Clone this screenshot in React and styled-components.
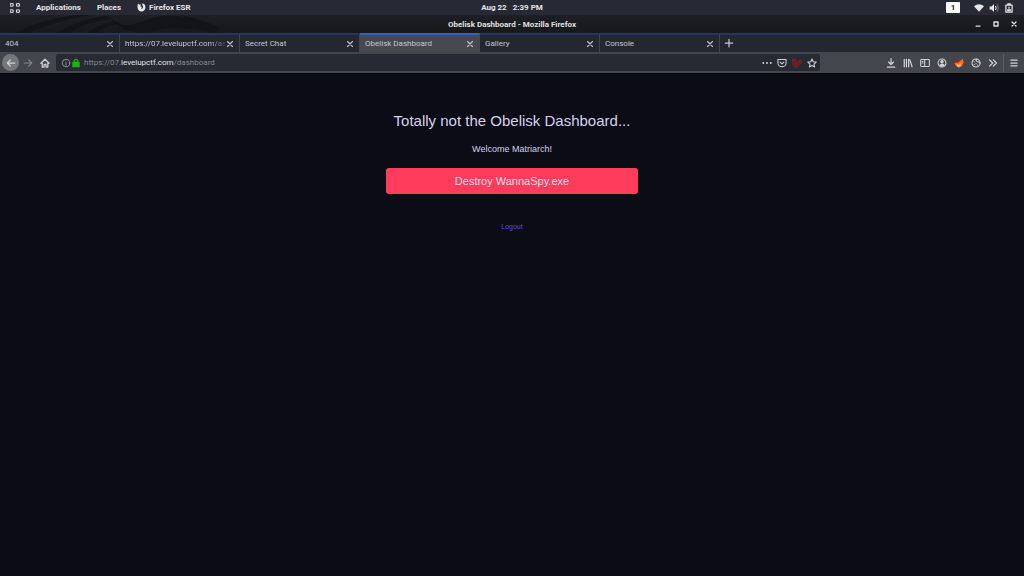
import React from 'react';
import styled, { createGlobalStyle, css } from 'styled-components';

const GlobalStyle = createGlobalStyle`
  * {
    box-sizing: border-box;
  }
  body {
    margin: 0;
    background: #0c0c16;
    font-family: Roboto, 'Noto Sans', sans-serif;
  }
  button {
    margin: 0;
    padding: 0;
    border: 0;
    background: none;
    color: inherit;
    font-family: inherit;
  }
`;

const Desktop = styled.div`
  display: flex;
  flex-direction: column;
  min-height: 100vh;
`;

/* ---- system panel ---- */

const Panel = styled.header`
  display: grid;
  grid-template-columns: 1fr auto 1fr;
  align-items: center;
  height: 15px;
  padding: 0 10px;
  background: #272935;
  color: #e6e6ea;
  font-size: 8px;
  font-weight: 700;
  line-height: 15px;
`;

const PanelMenu = styled.nav`
  display: flex;
  align-items: center;
  gap: 16px;
`;

const PanelButton = styled.button`
  display: flex;
  align-items: center;
  gap: 3px;
  font-size: 8px;
  font-weight: 700;
  line-height: 15px;
`;

const Clock = styled.time`
  white-space: pre;
`;

const Tray = styled.div`
  display: flex;
  align-items: center;
  justify-content: flex-end;
  gap: 5px;
`;

const Workspace = styled.button`
  width: 14px;
  height: 11px;
  margin-right: 9px;
  border-radius: 1px;
  background: #fff;
  color: #222;
  font-size: 8px;
  font-weight: 700;
  line-height: 11px;
`;

/* ---- window ---- */

const TitleBar = styled.div`
  display: grid;
  grid-template-columns: 1fr auto 1fr;
  align-items: center;
  height: 18px;
  background: linear-gradient(#1d1f24, #17181b);
  color: #e0e0e2;
`;

const DragonArt = styled.svg`
  width: 230px;
  height: 18px;
`;

const WindowTitle = styled.h1`
  margin: 0;
  padding-top: 2px;
  font-size: 8px;
  font-weight: 700;
  line-height: 16px;
`;

const WindowControls = styled.div`
  display: flex;
  justify-content: flex-end;
  gap: 8px;
  padding-right: 5px;
`;

const TabStrip = styled.div`
  display: flex;
  height: 19px;
  border-top: 2px solid #21376c;
  background: #242630;
  color: #c6c7cb;
`;

const Tab = styled.div`
  display: flex;
  align-items: center;
  flex: 0 1 120px;
  min-width: 0;
  height: 17px;
  padding: 0 4px 0 5px;
  border-right: 1px solid #43454e;
  ${({ $active }) => $active && css`
    height: 19px;
    margin-top: -2px;
    border-top: 2px solid #2c63c8;
    border-right-color: #474950;
    background: #474950;
  `}
`;

const TabLabel = styled.button`
  flex: 1;
  overflow: hidden;
  font-size: 8px;
  line-height: 17px;
  text-align: left;
  white-space: nowrap;
  ${({ $fade }) => $fade && css`
    mask-image: linear-gradient(to right, #000 84%, transparent 104%);
  `}
`;

const IconButton = styled.button`
  display: flex;
  align-items: center;
  justify-content: center;
  width: ${({ $size }) => $size || 10}px;
  height: ${({ $size }) => $size || 10}px;
`;

const NewTab = styled(IconButton)`
  margin: 3px 0 0 4px;
`;

const NavBar = styled.div`
  display: flex;
  align-items: center;
  height: 21px;
  padding: 1px 5px 1px 2px;
  background: #44464d;
  color: #d0d1d4;
`;

const BackButton = styled(IconButton)`
  border-radius: 50%;
  background: #75777c;
`;

const NavGroup = styled.div`
  display: flex;
  align-items: center;
  gap: 7px;
  margin-right: 6px;
`;

const History = styled.div`
  display: flex;
  align-items: center;
  gap: 4px;
`;

const UrlBar = styled.div`
  display: flex;
  align-items: center;
  flex: 1;
  max-width: 764px;
  height: 17px;
  padding: 0 3px 0 5px;
  border-radius: 2px;
  background: #272934;
`;

const UrlText = styled.a`
  flex: 1;
  margin-left: 3px;
  color: #85868d;
  font-size: 8px;
  line-height: 17px;
  text-decoration: none;
`;

const UrlHost = styled.span`
  color: #e2e2e5;
`;

const UrlActions = styled.div`
  display: flex;
  gap: 5px;
`;

const Tools = styled.div`
  display: flex;
  align-items: center;
  gap: 7px;
  margin-left: auto;
`;

const MenuSlot = styled.div`
  display: flex;
  align-items: center;
  height: 18px;
  margin-left: -2px;
  padding-left: 5px;
  border-left: 1px solid #5b5d64;
`;

/* ---- page ---- */

const Page = styled.main`
  display: flex;
  flex-direction: column;
  align-items: center;
  flex: 1;
  padding: 38px 16px 0;
  border-top: 1px solid #06060c;
  background: #0c0c16;
  color: #d4d2ee;
  font-family: 'Liberation Sans', Arial, sans-serif;
`;

const Heading = styled.h2`
  margin: 0;
  font-size: 15px;
  font-weight: 400;
  line-height: 18px;
`;

const Welcome = styled.p`
  margin: 14px 0 0;
  font-size: 9px;
  line-height: 10px;
`;

const DestroyButton = styled.button`
  width: 100%;
  max-width: 252px;
  height: 26px;
  margin-top: 14px;
  border-radius: 3px;
  background: #ff3c5c;
  color: #f6dfe8;
  font-size: 11px;
  line-height: 26px;
`;

const Logout = styled.a`
  margin-top: 28px;
  color: #6446d8;
  font-size: 7px;
  line-height: 10px;
  text-decoration: none;
`;

const Icon = ({ size = 10, children, ...rest }) => (
  <svg
    width={size}
    height={size}
    viewBox="0 0 16 16"
    fill="none"
    stroke="currentColor"
    strokeWidth="1.7"
    strokeLinecap="round"
    strokeLinejoin="round"
    aria-hidden="true"
    {...rest}
  >
    {children}
  </svg>
);

const CloseIcon = () => (
  <Icon size={8}><path d="M3 3l10 10M13 3L3 13" strokeWidth="2.2" /></Icon>
);

const tabs = [
  { title: '404' },
  { title: 'https://07.levelupctf.com/as', fade: true },
  { title: 'Secret Chat' },
  { title: 'Obelisk Dashboard', active: true },
  { title: 'Gallery' },
  { title: 'Console' },
];

const tools = [
  {
    name: 'Downloads',
    icon: <path d="M8 1v9M4 6.500l4 4 4-4M2 14.500h12" strokeWidth="2" />,
  },
  {
    name: 'Library',
    icon: <path d="M2 2v12M5.500 2v12M9 2v12M11 3l3.500 11" strokeWidth="2" />,
  },
  {
    name: 'Sidebars',
    icon: (
      <>
        <rect x="1" y="2.500" width="14" height="11" rx="1.500" />
        <path d="M7.500 3v10M3.500 5.500h1.500M3.500 8h1.500" />
      </>
    ),
  },
  {
    name: 'Account',
    icon: (
      <>
        <circle cx="8" cy="8" r="6.300" />
        <circle cx="8" cy="6" r="2.800" fill="currentColor" stroke="none" />
        <path d="M3.500 12c0-4 9-4 9 0l-4.500 2z" fill="currentColor" stroke="none" />
      </>
    ),
  },
  {
    name: 'FoxyProxy',
    icon: (
      <g stroke="none">
        <circle cx="8" cy="8" r="7" fill="#8c2a2a" />
        <path d="M1 8l6-1 7-6 1.500 6-3 6-5 2.500-5-3z" fill="#ee7124" />
        <path d="M4 10l4 1 3-3-1 5-4 1z" fill="#ffd29b" />
      </g>
    ),
  },
  {
    name: 'Cookies',
    icon: (
      <>
        <circle cx="8" cy="8" r="6.500" />
        <path d="M9 2c-2 2 0 4 2 4s2 2 3.500 2M5 6h.1M8 9h.1M5 10.500h.1M10.500 11.500h.1" strokeWidth="1.900" />
      </>
    ),
  },
  {
    name: 'More tools',
    icon: <path d="M2.500 3l5 5-5 5M8.500 3l5 5-5 5" strokeWidth="2.2" />,
  },
];

const App = () => {
  return (
    <Desktop>
      <GlobalStyle />
      <Panel>
        <PanelMenu>
          <PanelButton aria-label="Activities">
            <Icon strokeWidth="1.6" strokeLinejoin="miter">
              <path d="M1 1h4v4H1zM11 1h4v4h-4zM1 11h4v4H1zM11 11h4v4h-4z" />
            </Icon>
          </PanelButton>
          <PanelButton>Applications</PanelButton>
          <PanelButton>Places</PanelButton>
          <PanelButton>
            <Icon size={9} stroke="none" fill="currentColor">
              <path d="M2 1l2 2 3-1-1 4 3 1-2 3c3 1 5-2 3-5l-1-4c5 0 6 4 6 7 0 4-3 7-7 7s-7-3-7-7c0-3 0-5 1-7z" />
            </Icon>
            Firefox ESR
          </PanelButton>
        </PanelMenu>
        <Clock>{'Aug 22   2:39 PM'}</Clock>
        <Tray>
          <Workspace>1</Workspace>
          <Icon stroke="none" fill="currentColor"><path d="M0 5q8-6 16 0L8 14z" /></Icon>
          <Icon>
            <path d="M1 5.500h3l4-4v13l-4-4H1z" fill="currentColor" stroke="none" />
            <path d="M10.500 5.500q2 2.500 0 5" />
            <path d="M13 3q3.500 5 0 10" opacity=".4" />
          </Icon>
          <Icon>
            <path d="M3 3.500h10v11H3zM6 1.500h4" strokeWidth="2" />
            <path d="M5 10h6v3H5zM7 6h2v3H7z" fill="currentColor" stroke="none" />
          </Icon>
        </Tray>
      </Panel>

      <TitleBar>
        <DragonArt viewBox="0 0 230 18" fill="none" aria-hidden="true">
          <path d="M15 18C36 8 54 2 78 0h12C63 5 44 11 29 18zM58 18c14-9 28-15 48-17l6 3C94 6 82 10 69 18zM88 18c8-6 16-10 28-12l4 3c-10 1-18 4-22 9z" fill="#131417" />
          <path d="M108 0c8 10 18 13 34 7 16-7 28-7 44-5l-6-2 14 3 12 4 14 6-3 5-13-2-12-2c-15-1-24-2-34 1-12 4-38 5-50-15z" fill="#131417" />
        </DragonArt>
        <WindowTitle>Obelisk Dashboard - Mozilla Firefox</WindowTitle>
        <WindowControls>
          <IconButton aria-label="Minimize"><Icon size={8}><path d="M4 12h8" strokeWidth="2.500" /></Icon></IconButton>
          <IconButton aria-label="Maximize"><Icon size={8}><path d="M4 4h8v8H4z" strokeWidth="2.800" /></Icon></IconButton>
          <IconButton aria-label="Close window"><Icon size={8}><path d="M4 4l8 8M12 4l-8 8" strokeWidth="2.500" /></Icon></IconButton>
        </WindowControls>
      </TitleBar>

      <TabStrip>
        {tabs.map((tab) => (
          <Tab key={tab.title} $active={tab.active}>
            <TabLabel $fade={tab.fade}>{tab.title}</TabLabel>
            <IconButton aria-label={`Close ${tab.title}`}><CloseIcon /></IconButton>
          </Tab>
        ))}
        <NewTab aria-label="New tab"><Icon><path d="M8 2v12M2 8h12" strokeWidth="2" /></Icon></NewTab>
      </TabStrip>

      <NavBar>
        <NavGroup>
          <History>
            <BackButton $size={17} aria-label="Back"><Icon><path d="M14 8H2M7 3L2 8l5 5" strokeWidth="2" /></Icon></BackButton>
            <IconButton aria-label="Forward"><Icon stroke="#85878d"><path d="M2 8h12M9 3l5 5-5 5" /></Icon></IconButton>
          </History>
          <IconButton aria-label="Home">
            <Icon><path d="M1.500 8.500L8 2l6.500 6.500M3.500 8v6.500h3V10h3v4.500h3V8" strokeWidth="2" /></Icon>
          </IconButton>
        </NavGroup>
        <UrlBar>
          <IconButton aria-label="Site information">
            <Icon stroke="#9a9ba1" strokeWidth="1.4"><circle cx="8" cy="8" r="6" /><path d="M8 7.500v4M8 4.500v.2" /></Icon>
          </IconButton>
          <IconButton aria-label="Secure connection">
            <Icon stroke="#12bc00">
              <rect x="3" y="7" width="10" height="7" fill="#12bc00" />
              <path d="M5 7V5a3 3 0 0 1 6 0v2" strokeWidth="2" />
            </Icon>
          </IconButton>
          <UrlText href="#dashboard">https://07.<UrlHost>levelupctf.com</UrlHost>/dashboard</UrlText>
          <UrlActions>
            <IconButton aria-label="Page actions">
              <Icon><path d="M2 8h.1M8 8h.1M14 8h.1" strokeWidth="3" /></Icon>
            </IconButton>
            <IconButton aria-label="Save to Pocket">
              <Icon><path d="M1.500 2.500h13V8a6.500 6 0 0 1-13 0zM5 6.500l3 3 3-3" /></Icon>
            </IconButton>
            <IconButton aria-label="Tracker blocker">
              <Icon stroke="#86202a"><path d="M1 2l3-1 3 2v7l3-2V5l3-2 2 1v4l-3 3-5 4-4-2zM1 2l3 8 3-1M10 5l4 3" fill="#6d1c27" strokeWidth="1.200" /></Icon>
            </IconButton>
            <IconButton aria-label="Bookmark this page">
              <Icon><path d="M8 1.500l2 4.500 4.700.5-3.500 3.200 1 4.800L8 12l-4.200 2.500 1-4.800L1.300 6.500 6 6z" /></Icon>
            </IconButton>
          </UrlActions>
        </UrlBar>
        <Tools>
          {tools.map((tool) => (
            <IconButton key={tool.name} aria-label={tool.name}><Icon>{tool.icon}</Icon></IconButton>
          ))}
          <MenuSlot>
            <IconButton aria-label="Open menu"><Icon><path d="M3 3.500h10M3 8h10M3 12.500h10" strokeWidth="2" /></Icon></IconButton>
          </MenuSlot>
        </Tools>
      </NavBar>

      <Page>
        <Heading>Totally not the Obelisk Dashboard...</Heading>
        <Welcome>Welcome Matriarch!</Welcome>
        <DestroyButton>Destroy WannaSpy.exe</DestroyButton>
        <Logout href="#logout">Logout</Logout>
      </Page>
    </Desktop>
  );
};

export default App;
